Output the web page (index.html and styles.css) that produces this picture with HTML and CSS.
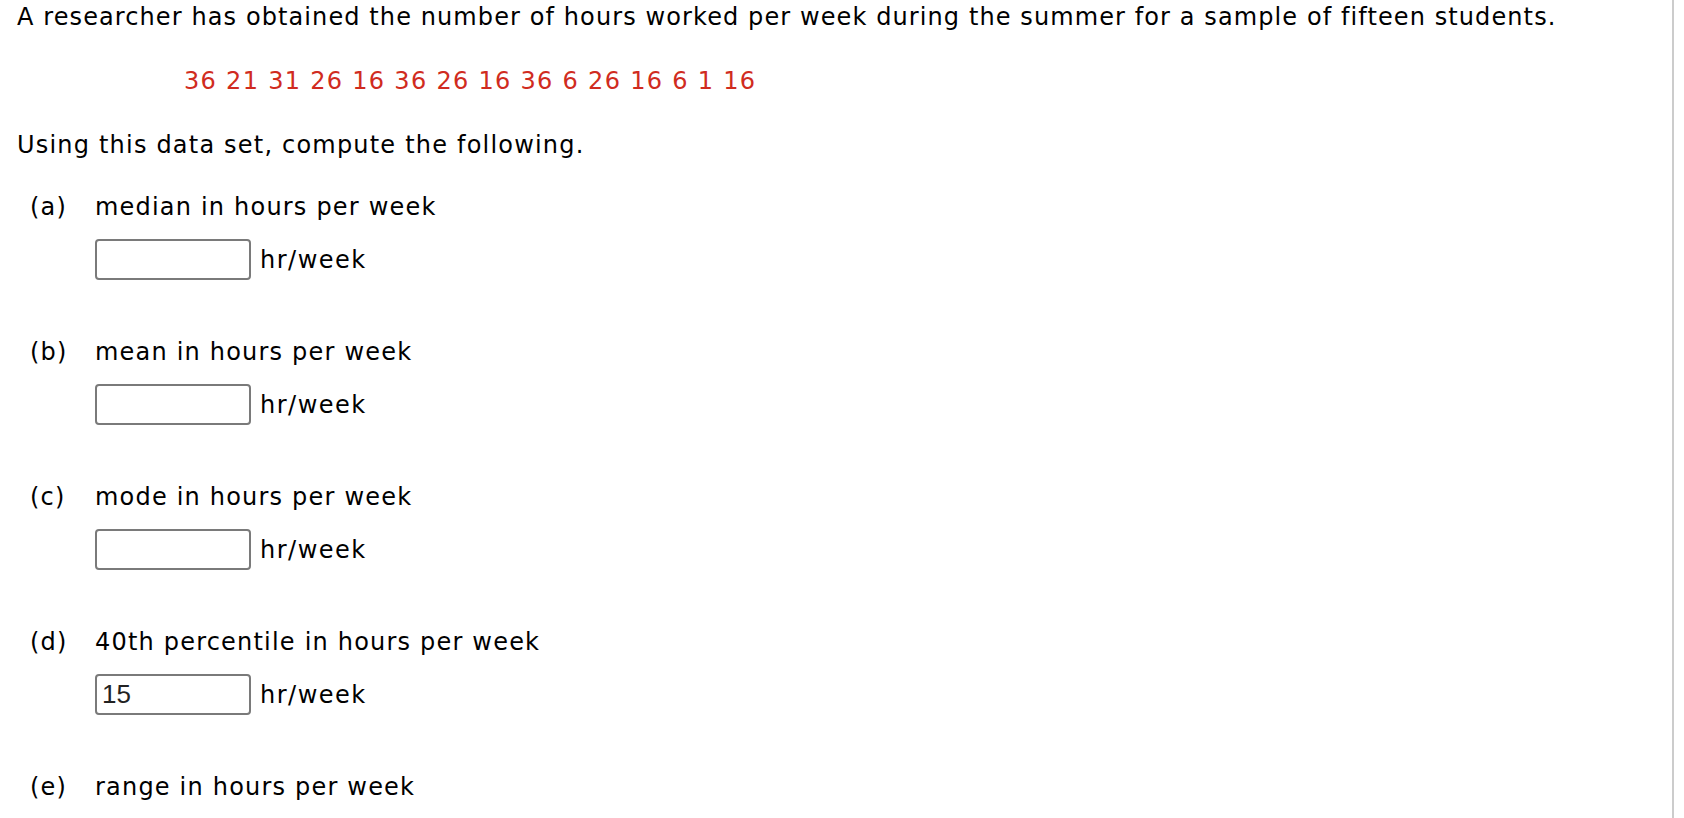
FILE: index.html
```html
<!DOCTYPE html>
<html lang="en">
<head>
<meta charset="utf-8">
<title>Hours worked per week</title>
<link rel="stylesheet" href="styles.css">
</head>
<body>
<div class="page">
  <p class="intro">A researcher has obtained the number of hours worked per week during the summer for a sample of fifteen students.</p>
  <p class="data">36 21 31 26 16 36 26 16 36 6 26 16 6 1 16</p>
  <p class="using">Using this data set, compute the following.</p>
  <div class="parts">
    <div class="part">
      <div class="label"><span class="letter">(a)</span><span class="text">median in hours per week</span></div>
      <div class="answer"><input class="box" type="text" value=""><span class="unit">hr/week</span></div>
    </div>
    <div class="part">
      <div class="label"><span class="letter">(b)</span><span class="text">mean in hours per week</span></div>
      <div class="answer"><input class="box" type="text" value=""><span class="unit">hr/week</span></div>
    </div>
    <div class="part">
      <div class="label"><span class="letter">(c)</span><span class="text">mode in hours per week</span></div>
      <div class="answer"><input class="box" type="text" value=""><span class="unit">hr/week</span></div>
    </div>
    <div class="part">
      <div class="label"><span class="letter">(d)</span><span class="text">40th percentile in hours per week</span></div>
      <div class="answer"><input class="box" type="text" value="15"><span class="unit">hr/week</span></div>
    </div>
    <div class="part">
      <div class="label"><span class="letter">(e)</span><span class="text">range in hours per week</span></div>
      <div class="answer"><input class="box" type="text" value=""><span class="unit">hr/week</span></div>
    </div>
  </div>
</div>
</body>
</html>
```

FILE: styles.css
```css
html, body {
  margin: 0;
  padding: 0;
  background: #ffffff;
}

body {
  font-family: "DejaVu Sans", Verdana, sans-serif;
  font-size: 24px;
  line-height: 34px;
  letter-spacing: 1.2px;
  color: #000000;
  overflow: hidden;
  height: 100vh;
}

.page {
  box-sizing: border-box;
  width: 1674px;
  height: 100vh;
  overflow: hidden;
  padding-left: 17px;
  border-right: 2px solid #cccccc;
}

p {
  margin: 0;
}

.intro {
  letter-spacing: 1.1px;
}

.data {
  margin-top: 30px;
  padding-left: 167px;
  color: #d02b20;
  letter-spacing: 1.3px;
}

.using {
  margin-top: 30px;
}

.parts {
  margin-top: 28px;
  padding-left: 13px;
}

.part {
  margin-bottom: 55px;
}

.label {
  display: flex;
}

.letter {
  width: 65px;
}

.answer {
  display: flex;
  align-items: flex-start;
  margin-top: 15px;
  padding-left: 65px;
}

.box {
  box-sizing: border-box;
  width: 156px;
  height: 41px;
  margin: 0;
  padding: 0 3px 0 5px;
  border: 2px solid #7a7a7a;
  border-radius: 4px;
  font-family: "Liberation Sans", Arial, sans-serif;
  font-size: 26px;
  letter-spacing: normal;
  color: #222222;
  background: #ffffff;
}

.unit {
  margin-top: 4px;
  margin-left: 9px;
  letter-spacing: 1.5px;
}
```
